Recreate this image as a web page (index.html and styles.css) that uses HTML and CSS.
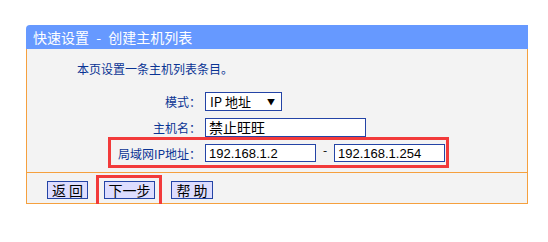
FILE: index.html
```html
<!DOCTYPE html>
<html>
    <head>
        <meta charset="utf-8">
        <title>快速设置 - 创建主机列表</title>
        <link rel="stylesheet" href="styles.css">
    </head>
    <body>
        <div class="panel">
            <div class="head">快速设置 - 创建主机列表</div>
            <div class="main">
                <p class="intro">本页设置一条主机列表条目。</p>
                <div class="row">
                    <span class="label">模式：</span>
                    <div class="select"><span>IP 地址</span><span class="arrow">▼</span></div>
                </div>
                <div class="row">
                    <span class="label">主机名：</span>
                    <input type="text" class="field name" value="禁止旺旺">
                </div>
                <div class="row mark">
                    <span class="label">局域网IP地址：</span>
                    <input type="text" class="field ip" value="192.168.1.2">
                    <span class="dash">-</span>
                    <input type="text" class="field ip" value="192.168.1.254">
                </div>
            </div>
            <div class="foot">
                <button class="btn b1">返 回</button>
                <span class="pick"><button class="btn b2">下一步</button></span>
                <button class="btn b3">帮 助</button>
            </div>
        </div>
    </body>
</html>
```

FILE: styles.css
```css
html, body {
    margin: 0;
    background: #fff;
}
body {
    font-family: "Noto Sans CJK SC", "Liberation Sans", sans-serif;
    font-size: 12px;
    color: #0a3494;
}
.panel {
    width: 502px;
    margin: 25px 0 0 26px;
}
.head {
    height: 24px;
    line-height: 24px;
    padding-left: 7px;
    background: #6699ff;
    color: #fff;
    font-size: 14px;
    word-spacing: 4px;
    border-radius: 4px 0 0 0;
}
.main {
    height: 123px;
    background: #f3f3f3;
    border: 1px solid #f5a03e;
    border-top: 0;
}
.intro {
    margin: 0;
    padding: 12px 0 11px 50px;
    line-height: 16px;
}
.row {
    position: relative;
    display: flex;
    align-items: center;
    height: 26px;
}
.label {
    width: 174px;
    text-align: right;
    margin-right: 4px;
}
.select {
    box-sizing: border-box;
    width: 77px;
    height: 19px;
    display: flex;
    align-items: center;
    justify-content: space-between;
    padding: 0 6px 0 4px;
    background: #fff;
    border: 1px solid #2444a6;
    color: #000;
    font-size: 13px;
}
.arrow {
    font-size: 8px;
}
.field {
    box-sizing: border-box;
    height: 19px;
    margin: 0;
    padding: 0 3px;
    border: 1px solid #2444a6;
    background: #fff;
    color: #000;
    font-family: "Liberation Sans", "Noto Sans CJK SC", sans-serif;
    font-size: 13px;
    outline: none;
}
.name {
    width: 161px;
    font-size: 14px;
}
.ip {
    width: 111px;
    height: 18px;
}
.dash {
    width: 18px;
    text-align: center;
    color: #000;
    margin-top: -7px;
}
.mark::after {
    content: "";
    position: absolute;
    left: 81px;
    top: -3px;
    width: 341px;
    height: 31px;
    box-sizing: border-box;
    border: 3px solid #f23a3a;
}
.foot {
    display: flex;
    gap: 16px;
    height: 22px;
    padding: 8px 0 0 20px;
    background: #f3f3f3;
    border: 1px solid #f5a03e;
    border-top: 0;
}
.btn {
    height: 18px;
    padding: 0;
    background: #ddddff;
    border: 1px solid #2444a6;
    color: #000;
    font-family: "Noto Sans CJK SC", sans-serif;
    font-size: 14px;
    line-height: 16px;
}
.b1 { width: 41px; }
.b2 { width: 51px; }
.b3 { width: 42px; }
.pick {
    position: relative;
    display: flex;
}
.pick::after {
    content: "";
    position: absolute;
    left: -8px;
    right: -7px;
    top: -6px;
    bottom: -6px;
    border: 3px solid #f23a3a;
}
```
